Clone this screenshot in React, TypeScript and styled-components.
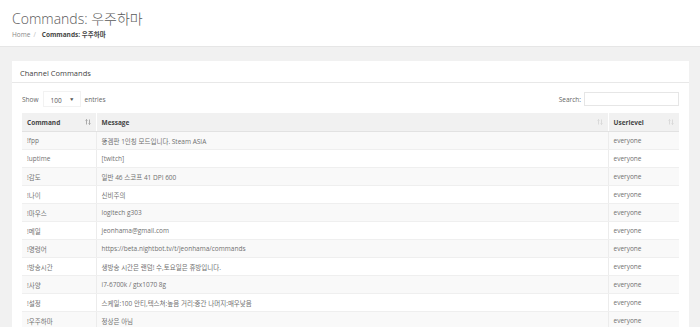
import React from "react";
import styled, { createGlobalStyle } from "styled-components";

const Global = createGlobalStyle`
  html, body { margin: 0; padding: 0; }
  body {
    background: #f1f1f1;
    font-family: "Open Sans", "Noto Sans CJK KR", sans-serif;
    color: #555;
  }
`;

const Header = styled.header`
  background: #fff;
  height: 47px;
  box-sizing: border-box;
  padding: 9px 12px 0;
  border-bottom: 1px solid #e6e6e6;
`;

const Title = styled.h1`
  margin: 0;
  font-size: 14px;
  font-weight: 300;
  line-height: 20px;
  color: #5a5a5a;
`;

const Crumbs = styled.div`
  margin-top: 1px;
  font-size: 6.5px;
  line-height: 10px;
  color: #888;
  display: flex;
  gap: 3px;
`;

const CrumbSep = styled.span`
  color: #bbb;
`;

const CrumbActive = styled.span`
  font-weight: 700;
  color: #444;
  margin-left: 3px;
`;

const Content = styled.main`
  padding: 14px 11px 0 12px;
`;

const Panel = styled.section`
  background: #fff;
`;

const PanelHeading = styled.div`
  height: 22px;
  box-sizing: border-box;
  padding: 2px 8px 0;
  display: flex;
  align-items: center;
  font-size: 7.5px;
  color: #444;
  border-bottom: 1px solid #e8e8e8;
`;

const PanelBody = styled.div`
  padding: 9px 10px 0;
`;

const Controls = styled.div`
  display: flex;
  justify-content: space-between;
  align-items: center;
  height: 14px;
  margin-bottom: 7px;
  font-size: 6.5px;
  color: #666;
`;

const Label = styled.label`
  display: flex;
  align-items: center;
  gap: 3px;
`;

const SelectBox = styled.div`
  width: 36px;
  height: 14px;
  box-sizing: border-box;
  margin: 0 2px;
  padding: 3px 6px 0 7px;
  display: flex;
  align-items: center;
  justify-content: space-between;
  background: #fff;
  box-shadow: 0 0 0 1px #f2f2f2;
  color: #555;
  font-size: 6.5px;
`;

const Caret = styled.span`
  font-size: 3.5px;
  color: #555;
  margin-top: -3px;
`;

const SearchInput = styled.div`
  width: 95px;
  height: 14px;
  box-sizing: border-box;
  border: 1px solid #e6e6e6;
  background: #fff;
`;

const Table = styled.table`
  width: 657px;
  border-collapse: collapse;
  table-layout: fixed;
  font-size: 6.5px;
`;

const Th = styled.th<{ $w: number }>`
  width: ${(p) => p.$w}px;
  height: 18px;
  box-sizing: border-box;
  padding: 1px 5px 0;
  text-align: left;
  font-weight: 700;
  color: #444;
  background: #f1f1f1;
  border-right: 1px solid #fff;
  border-bottom: 1px solid #e2e2e2;
  position: relative;
  &:last-child { border-right: none; }
`;

const SortIcon = styled.svg<{ $dark?: boolean }>`
  position: absolute;
  right: 5px;
  top: 6px;
  width: 6px;
  height: 6px;
  color: ${(p) => (p.$dark ? "#999" : "#d4d4d4")};
`;

const Tr = styled.tr<{ $odd: boolean }>`
  background: ${(p) => (p.$odd ? "#f9f9f9" : "#fff")};
`;

const Td = styled.td`
  height: 18px;
  box-sizing: border-box;
  padding: 1px 5px 0;
  color: #707070;
  border-right: 1px solid #ececec;
  border-bottom: 1px solid #efefef;
  white-space: nowrap;
  overflow: hidden;
  &:last-child { border-right: none; }
`;

const Sort = ({ dark }: { dark?: boolean }) => (
  <SortIcon $dark={dark} viewBox="0 0 6 6" fill="none" stroke="currentColor" strokeWidth="0.8">
    <path d="M1.5 0.5 V5.5 M0.5 1.5 L1.5 0.5 L2.5 1.5" />
    <path d="M4.5 0.5 V5.5 M3.5 4.5 L4.5 5.5 L5.5 4.5" />
  </SortIcon>
);

const rows: [string, string][] = [
  ["!fpp", "똥겜판 1인칭 모드입니다. Steam ASIA"],
  ["!uptime", "[twitch]"],
  ["!감도", "일반 46 스코프 41 DPI 600"],
  ["!나이", "신비주의"],
  ["!마우스", "logitech g303"],
  ["!메일", "jeonhama@gmail.com"],
  ["!명령어", "https://beta.nightbot.tv/t/jeonhama/commands"],
  ["!방송시간", "생방송 시간은 랜덤! 수,토요일은 휴방입니다."],
  ["!사양", "i7-6700k / gtx1070 8g"],
  ["!설정", "스케일:100 안티,텍스쳐:높음 거리:중간 나머지:매우낮음"],
  ["!우주하마", "정상은 아님"],
];

export default function App() {
  return (
    <>
      <Global />
      <Header>
        <Title>Commands: 우주하마</Title>
        <Crumbs>
          <span>Home</span>
          <CrumbSep>/</CrumbSep>
          <CrumbActive>Commands: 우주하마</CrumbActive>
        </Crumbs>
      </Header>
      <Content>
        <Panel>
          <PanelHeading>Channel Commands</PanelHeading>
          <PanelBody>
            <Controls>
              <Label>
                Show
                <SelectBox>
                  100 <Caret>▼</Caret>
                </SelectBox>
                entries
              </Label>
              <Label>
                Search:
                <SearchInput />
              </Label>
            </Controls>
            <Table>
              <thead>
                <tr>
                  <Th $w={74}>Command<Sort dark /></Th>
                  <Th $w={512}>Message<Sort /></Th>
                  <Th $w={71}>Userlevel<Sort /></Th>
                </tr>
              </thead>
              <tbody>
                {rows.map(([c, m], i) => (
                  <Tr key={c} $odd={i % 2 === 0}>
                    <Td>{c}</Td>
                    <Td>{m}</Td>
                    <Td>everyone</Td>
                  </Tr>
                ))}
              </tbody>
            </Table>
          </PanelBody>
        </Panel>
      </Content>
    </>
  );
}
